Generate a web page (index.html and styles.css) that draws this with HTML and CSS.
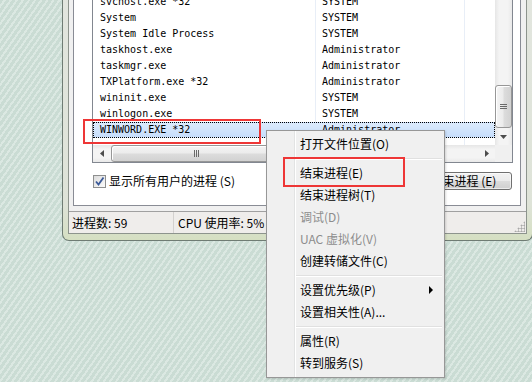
FILE: index.html
```html
<!DOCTYPE html>
<html lang="zh-CN">
<head>
<meta charset="utf-8">
<title>Windows 任务管理器</title>
<link rel="stylesheet" href="styles.css">
</head>
<body>
<div class="window">
  <div class="client">
    <div class="panel-wrap">
      <div class="panel">
        <div class="listview">
          <div class="rows">
            <div class="header"><span class="c1">映像名称</span><span class="c2">用户名</span></div>
            <div class="row"><span class="c1">spoolsv.exe</span><span class="c2">SYSTEM</span></div>
            <div class="row"><span class="c1">svchost.exe *32</span><span class="c2">SYSTEM</span></div>
            <div class="row"><span class="c1">System</span><span class="c2">SYSTEM</span></div>
            <div class="row"><span class="c1">System Idle Process</span><span class="c2">SYSTEM</span></div>
            <div class="row"><span class="c1">taskhost.exe</span><span class="c2">Administrator</span></div>
            <div class="row"><span class="c1">taskmgr.exe</span><span class="c2">Administrator</span></div>
            <div class="row"><span class="c1">TXPlatform.exe *32</span><span class="c2">Administrator</span></div>
            <div class="row"><span class="c1">wininit.exe</span><span class="c2">SYSTEM</span></div>
            <div class="row"><span class="c1">winlogon.exe</span><span class="c2">SYSTEM</span></div>
            <div class="row selected"><span class="c1">WINWORD.EXE *32</span><span class="c2">Administrator</span></div>
          </div>
          <div class="vscroll">
            <div class="sb-btn"><svg width="7" height="4" viewBox="0 0 7 4"><path d="M0 4 L3.5 0 L7 4 Z" fill="#4d4d4d"/></svg></div>
            <div class="vs-track">
              <div class="vs-thumb"><svg width="7" height="7" viewBox="0 0 7 7"><path d="M0 1.5 H7 M0 3.5 H7 M0 5.5 H7" stroke="#6a6a6a" stroke-width="1"/></svg></div>
            </div>
            <div class="sb-btn"><svg width="7" height="4" viewBox="0 0 7 4"><path d="M0 0 L3.5 4 L7 0 Z" fill="#4d4d4d"/></svg></div>
          </div>
          <div class="hscroll">
            <div class="sb-btn"><svg width="4" height="7" viewBox="0 0 4 7"><path d="M4 0 L0 3.5 L4 7 Z" fill="#4d4d4d"/></svg></div>
            <div class="hs-thumb"><svg width="7" height="7" viewBox="0 0 7 7"><path d="M1.5 0 V7 M3.5 0 V7 M5.5 0 V7" stroke="#6a6a6a" stroke-width="1"/></svg></div>
            <div class="hs-track"></div>
            <div class="sb-btn"><svg width="4" height="7" viewBox="0 0 4 7"><path d="M0 0 L4 3.5 L0 7 Z" fill="#4d4d4d"/></svg></div>
          </div>
          <div class="corner"></div>
        </div>
        <div class="actions">
          <label class="check"><span class="box"><svg width="11" height="11" viewBox="0 0 11 11"><path d="M2 5.5 L4.5 8.5 L9.5 1.5" fill="none" stroke="#3a5998" stroke-width="1.8"/></svg></span>显示所有用户的进程 (S)</label>
          <button class="btn">结束进程 (E)</button>
        </div>
      </div>
    </div>
    <div class="statusbar">
      <div class="pane p1">进程数: 59</div>
      <div class="pane p2">CPU 使用率: 5%</div>
      <div class="grip"></div>
    </div>
  </div>
</div>

<div class="menu">
  <div class="mi">打开文件位置(O)</div>
  <div class="sep"></div>
  <div class="mi">结束进程(E)</div>
  <div class="mi">结束进程树(T)</div>
  <div class="mi disabled">调试(D)</div>
  <div class="mi disabled">UAC 虚拟化(V)</div>
  <div class="mi">创建转储文件(C)</div>
  <div class="sep"></div>
  <div class="mi sub">设置优先级(P)</div>
  <div class="mi">设置相关性(A)...</div>
  <div class="sep"></div>
  <div class="mi">属性(R)</div>
  <div class="mi">转到服务(S)</div>
</div>

<div class="mark mark-row"></div>
<div class="mark mark-item"></div>
</body>
</html>
```

FILE: styles.css
```css
* { box-sizing: border-box; }
html, body { margin: 0; padding: 0; }
body {
  width: 532px;
  height: 382px;
  overflow: hidden;
  position: relative;
  background-color: #d1e2da;
  background-image: repeating-linear-gradient(-55deg, rgba(255,255,255,0.22) 0 2px, rgba(110,140,130,0.07) 2px 5px);
  font-family: "Noto Sans CJK SC", "Noto Sans", sans-serif;
  font-size: 12px;
  color: #000;
}

/* window */
.window {
  position: absolute;
  left: 62px;
  top: -60px;
  width: 471px;
  border: 1px solid #6f7c74;
  border-top: none;
  border-radius: 0 0 7px 7px;
  background: linear-gradient(#e3e6e0, #dee3d8 88%, #d5dfc2);
  padding: 0 5px 6px 5px;
}
.client {
  background: #f0f0f0;
  border: 1px solid #8d948d;
  border-top: none;
}
.panel-wrap { padding: 0 5px 0 4px; }
.panel {
  background: #fff;
  border: 1px solid #898c95;
  padding: 0 7px 15px 18px;
}

/* list view */
.listview {
  margin-top: 19px;
  height: 203px;
  border: 1px solid #828790;
  display: grid;
  grid-template-columns: 402px 17px;
  grid-template-rows: 184px 17px;
}
.rows {
  overflow: hidden;
  font-family: "DejaVu Sans Mono", "Liberation Mono", monospace;
  font-size: 10px;
  background-image:
    linear-gradient(to right, transparent 222px, #e8eef7 222px, #e8eef7 223px, transparent 223px),
    linear-gradient(to right, transparent 371px, #e8eef7 371px, #e8eef7 372px, transparent 372px);
}
.header {
  height: 17px;
  display: flex;
  font-family: "Noto Sans CJK SC", sans-serif;
  font-size: 12px;
  line-height: 17px;
  border-bottom: 1px solid #d5d5d5;
}
.row {
  height: 16px;
  line-height: 14px;
  display: flex;
  border: 1px solid transparent;
  white-space: pre;
}
.c1 { width: 228px; padding-left: 6px; flex: none; }
.c2 { flex: none; }
.row.selected {
  background: linear-gradient(#dcebfc, #c6ddfb);
  border: 1px dotted #000;
}

/* scrollbars */
.vscroll {
  display: flex;
  flex-direction: column;
  background: linear-gradient(to right, #e6e6e6, #f4f4f4 25%, #f4f4f4 75%, #e9e9e9);
}
.sb-btn {
  flex: none;
  width: 17px;
  height: 17px;
  display: flex;
  align-items: center;
  justify-content: center;
}
.vs-track {
  flex: 1;
  display: flex;
  flex-direction: column;
  justify-content: flex-end;
}
.vs-thumb {
  height: 43px;
  border: 1px solid #979797;
  border-radius: 3px;
  background: linear-gradient(to right, #f4f4f4, #ececec 45%, #dcdcdc 55%, #d2d2d2);
  box-shadow: inset 1px 1px 0 #fff;
  display: flex;
  align-items: center;
  justify-content: center;
}
.hscroll {
  display: flex;
  align-items: stretch;
  background: linear-gradient(#e6e6e6, #f4f4f4 25%, #f4f4f4 75%, #e9e9e9);
}
.hs-thumb {
  width: 171px;
  margin-left: 1px;
  border: 1px solid #979797;
  border-radius: 3px;
  background: linear-gradient(#f4f4f4, #ececec 45%, #dcdcdc 55%, #d2d2d2);
  box-shadow: inset 1px 1px 0 #fff;
  display: flex;
  align-items: center;
  justify-content: center;
}
.hs-track { flex: 1; }
.corner { background: #f0f0f0; }

/* checkbox + button row */
.actions {
  margin-top: 9px;
  display: flex;
  align-items: center;
  justify-content: space-between;
  padding: 0 1px 0 1px;
}
.check {
  display: flex;
  align-items: center;
  gap: 3px;
  font-size: 12px;
  line-height: 14px;
}
.box {
  width: 13px;
  height: 13px;
  border: 1px solid #8e8f8f;
  background: linear-gradient(135deg, #dcdcdc, #fbfbfb);
  display: flex;
  align-items: center;
  justify-content: center;
}
.btn {
  width: 97px;
  height: 18px;
  padding: 0;
  border: 1px solid #707070;
  border-radius: 3px;
  background: linear-gradient(#f2f2f2, #ebebeb 50%, #dddddd 50%, #cfcfcf);
  box-shadow: inset 0 0 0 1px rgba(255,255,255,0.6);
  font-family: "Noto Sans CJK SC", sans-serif;
  font-size: 12px;
  line-height: 16px;
  color: #000;
}

/* status bar */
.statusbar {
  margin-top: 5px;
  height: 22px;
  border-top: 1px solid #a0a0a0;
  background: #efedeb;
  display: flex;
  align-items: center;
  line-height: 21px;
}
.pane { height: 21px; white-space: nowrap; }
.p1 { width: 105px; padding-left: 3px; border-right: 1px solid #d3d1cf; }
.p2 { width: 140px; padding-left: 4px; border-right: 1px solid #d3d1cf; }
.grip {
  margin-left: auto;
  align-self: flex-end;
  width: 11px;
  height: 11px;
  margin-right: 1px;
  margin-bottom: 1px;
  background-image: radial-gradient(circle, #a9a9a9 0.9px, transparent 1.2px);
  background-size: 3px 3px;
  clip-path: polygon(100% 0, 100% 100%, 0 100%);
}

/* context menu */
.menu {
  position: absolute;
  left: 266px;
  top: 130px;
  width: 179px;
  border: 1px solid #979797;
  padding: 2px 2px 3px 2px;
  background: linear-gradient(to right, #f0f0f0 0, #f0f0f0 27px, #e2e3e3 27px, #e2e3e3 28px, #ffffff 28px, #ffffff 29px, #f0f0f0 29px);
  box-shadow: 1px 1px 2px rgba(0,0,0,0.15);
  font-family: "Noto Sans CJK SC", "Noto Sans", sans-serif;
  font-size: 12px;
}
.mi {
  position: relative;
  height: 22px;
  line-height: 22px;
  padding-left: 31px;
  color: #000;
  white-space: nowrap;
}
.mi.disabled { color: #8d8d8d; }
.mi.sub::after {
  content: "";
  position: absolute;
  right: 9px;
  top: 7px;
  border-left: 4px solid #000;
  border-top: 4px solid transparent;
  border-bottom: 4px solid transparent;
}
.sep {
  height: 7px;
  margin-left: 27px;
  background: linear-gradient(transparent 3px, #e0e0e0 3px, #e0e0e0 4px, #ffffff 4px, #ffffff 5px, transparent 5px);
}

/* red annotation boxes */
.mark {
  position: absolute;
  border: 2px solid #ee3636;
}
.mark-row { left: 83px; top: 119px; width: 178px; height: 25px; }
.mark-item { left: 283px; top: 157px; width: 122px; height: 30px; }
```
